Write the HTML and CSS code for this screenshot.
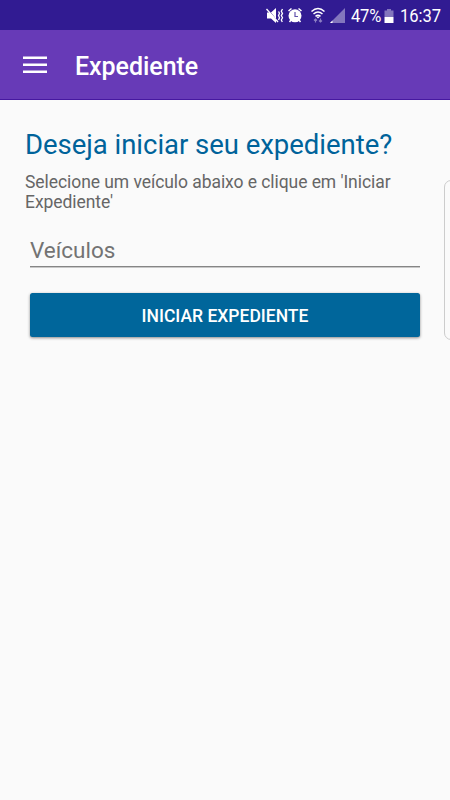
FILE: index.html
```html
<!DOCTYPE html>
<html lang="pt-BR">
<head>
<meta charset="utf-8">
<title>Expediente</title>
<link rel="stylesheet" href="styles.css">
</head>
<body>
<div class="status">
  <svg class="icons" width="80" height="30" viewBox="0 0 80 30" aria-hidden="true">
    <path d="M2 12.500h4l5-4.500v15l-5-4.500H2z" fill="#fff"/>
    <path d="M2 8l11 14" stroke="#311b92" stroke-width="1"/>
    <path d="M1.500 9l11.500 13" stroke="#fff" stroke-width="1.300"/>
    <path d="M13.500 11.500l1 1.800-1 2.200 1 2.200-1 2.300M17.500 9l-1.200 2.200 1.200 2.200-1.200 2.200 1.200 2.200-1.200 2.200 1 2" fill="none" stroke="#fff" stroke-width="1.300"/>
    <circle cx="30" cy="15.800" r="6.500" fill="#fff"/>
    <path d="M23.500 11l3-2.500M36.500 11l-3-2.500M26 20l-1.500 2M34 20l1.500 2" stroke="#fff" stroke-width="1.500"/>
    <path d="M30 12v4.500h3" fill="none" stroke="#6252ac" stroke-width="1.200"/>
    <path d="M46.500 11.500q6.500-6 13 0M48.500 14q4.500-4 9 0M50.500 16.300q2.500-2 5 0" fill="none" stroke="#fff" stroke-width="1.500"/>
    <path d="M51 16.500h4l-2 2z" fill="#fff"/>
    <path d="M50.500 18.500V22.500M49 20.500l1.500-1.500 1.500 1.500M55.500 18.500V22.500M54 20.500l1.500 1.500 1.500-1.500" fill="none" stroke="#8d80c3" stroke-width="1.200"/>
    <path d="M80 8v15H65z" fill="#8376bd"/>
    <path d="M67.500 20.500V23H65z" fill="#fff"/>
  </svg>
  <span class="percent">47%</span>
  <svg class="battery" width="10" height="16" viewBox="0 0 10 16" aria-hidden="true">
    <path d="M3 1h4v1.500h2.500V9h-9V2.500H3z" fill="#8376bd"/>
    <path d="M.5 9h9v6h-9z" fill="#fff"/>
  </svg>
  <time class="clock">16:37</time>
</div>
<header class="toolbar">
  <svg width="24" height="18" viewBox="0 0 24 18" aria-hidden="true">
    <path d="M0 1.750h24M0 8.750h24M0 15.750h24" stroke="#fff" stroke-width="2.500"/>
  </svg>
  <span class="title">Expediente</span>
</header>
<main>
  <h1>Deseja iniciar seu expediente?</h1>
  <p>Selecione um veículo abaixo e clique em 'Iniciar<br>Expediente'</p>
  <div class="field">Veículos</div>
  <button type="button"><span>INICIAR EXPEDIENTE</span></button>
</main>
<div class="edge-handle"></div>
</body>
</html>
```
FILE: styles.css
```css
* {
  box-sizing: border-box;
}

body {
  margin: 0;
  position: relative;
  height: 800px;
  overflow: hidden;
  background: #fafafa;
  font-family: Roboto, sans-serif;
}

.status {
  height: 30px;
  display: flex;
  align-items: center;
  padding-left: 265px;
  background: #311b92;
  color: #fff;
  font-size: 19px;
  line-height: 30px;
  white-space: nowrap;
}

.icons,
.battery {
  flex: none;
}

.percent,
.clock {
  padding-top: 2px;
  transform: scaleX(0.870);
  transform-origin: left;
}

.percent {
  width: 33px;
  margin-left: 6px;
  letter-spacing: -0.200px;
}

.battery {
  margin-top: 1px;
}

.clock {
  margin-left: 6px;
}

.toolbar {
  height: 70px;
  display: flex;
  align-items: center;
  padding-left: 23px;
  background: #673ab7;
  border-bottom: 1px solid #4618a0;
  color: #fff;
}

.title {
  margin: 4px 0 0 28px;
  font-size: 25px;
  font-weight: 500;
  line-height: 30px;
  letter-spacing: -0.050px;
}

main {
  display: flex;
  flex-direction: column;
  padding: 28px 30px 0;
}

h1 {
  margin: 0 -5px;
  color: #00639a;
  font-size: 27.500px;
  font-weight: 400;
  line-height: 34px;
  letter-spacing: -0.030px;
  white-space: nowrap;
}

p {
  margin: 10px -5px 0;
  color: #666;
  font-size: 17.500px;
  line-height: 20px;
  letter-spacing: -0.065px;
  white-space: nowrap;
}

.field {
  height: 35px;
  margin-top: 20px;
  border-bottom: 1px solid #858585;
  box-shadow: 0 1px 0 #c8c8c8;
  color: #737373;
  font-size: 22.500px;
  line-height: 36px;
}

button {
  height: 44px;
  margin-top: 26px;
  padding: 2px 0 0;
  border: 0;
  border-radius: 2.500px;
  background: #00669b;
  box-shadow: 0 1px 3px rgba(0, 0, 0, 0.450);
  color: #fff;
  font: 500 17.500px/42px Roboto, sans-serif;
}

.edge-handle {
  position: absolute;
  top: 180px;
  right: -8px;
  width: 14px;
  height: 160px;
  border: 1px solid #ccc;
  border-radius: 7px;
}
```
